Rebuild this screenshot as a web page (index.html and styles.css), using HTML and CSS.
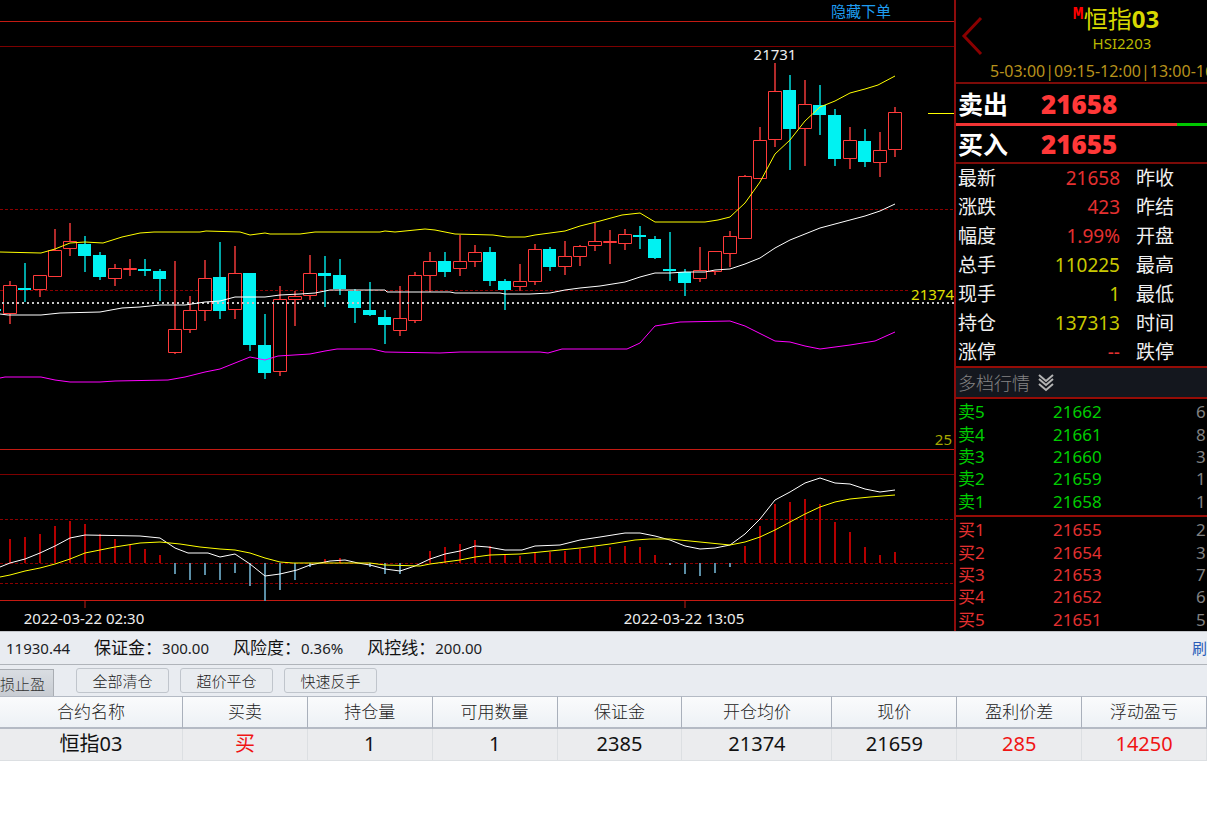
FILE: index.html
```html
<!DOCTYPE html>
<html lang="zh-CN">
<head>
<meta charset="utf-8">
<title>恒指03 HSI2203</title>
<link rel="stylesheet" href="styles.css">
</head>
<body>
<main class="market">
  <section class="chart">
    <header class="chart-bar"><a class="order-link" href="#">隐藏下单</a></header>
    <svg class="plot" viewBox="0 21 954 610" role="img" aria-label="K线图">
      <g class="frame">
        <path d="M0 21.5H954M0 449.5H954M0 600.5H954"/>
        <path d="M85 601V608M685 601V608"/>
      </g>
      <path class="frame-dim" d="M0 46.5H954M0 474.5H954"/>
      <path class="grid" d="M0 209.5H954M0 290.5H910M0 519.5H954M0 563.5H954M0 583.5H954"/>

      <!-- wicks -->
      <path class="wick-up" d="M10 281V324M40 275V297M55 229V251M70 223V256M115 264V286M130 259V276M175 261V354M190 296V333M205 260V321M235 246V319M280 286V376M295 291V326M310 255V300M400 286V336M415 272V323M430 252V292M460 235V276M475 245V267M520 264V291M535 244V285M565 241V275M580 245V266M595 223V251M610 230V264M625 229V250M700 247V282M715 251V275M730 231V267M745 175V178M760 127V141M775 63V147M805 80V166M850 127V169M880 132V177M895 107V157"/>
      <path class="wick-down" d="M25 263V302M85 236V272M100 252V280M145 259V276M160 269V301M220 242V319M250 273V351M265 314V379M325 256V307M340 259V295M355 289V323M370 282V316M385 310V344M445 252V277M490 247V286M505 279V310M550 247V271M640 226V249M655 236V259M670 232V281M685 269V296M790 75V170M820 85V135M835 109V166M865 129V167"/>
      <!-- rising bodies -->
      <path class="body-up" d="M3.5 285.5h13v28h-13zM33.5 275.5h13v14h-13zM48.5 250.5h13v26h-13zM63.5 241.5h13v7h-13zM108.5 268.5h13v10h-13zM123.5 268.5h13v1h-13zM168.5 329.5h13v23h-13zM183.5 310.5h13v19h-13zM198.5 278.5h13v32h-13zM228.5 273.5h13v36h-13zM273.5 299.5h13v72h-13zM288.5 296.5h13v3h-13zM303.5 273.5h13v22h-13zM393.5 318.5h13v12h-13zM408.5 275.5h13v45h-13zM423.5 261.5h13v14h-13zM453.5 261.5h13v7h-13zM468.5 252.5h13v9h-13zM513.5 281.5h13v5h-13zM528.5 249.5h13v32h-13zM558.5 256.5h13v10h-13zM573.5 246.5h13v10h-13zM588.5 241.5h13v4h-13zM603.5 241.5h13v1h-13zM618.5 234.5h13v9h-13zM693.5 270.5h13v8h-13zM708.5 251.5h13v20h-13zM723.5 236.5h13v17h-13zM738.5 176.5h13v62h-13zM753.5 140.5h13v38h-13zM768.5 91.5h13v48h-13zM798.5 104.5h13v24h-13zM843.5 140.5h13v18h-13zM873.5 150.5h13v12h-13zM888.5 112.5h13v37h-13z"/>
      <!-- falling bodies -->
      <path class="body-down" d="M0 309h1v2h-1zM18 288h13v2h-13zM78 244h13v12h-13zM93 255h13v22h-13zM138 269h13v2h-13zM153 271h13v8h-13zM213 277h13v34h-13zM243 273h13v72h-13zM258 345h13v28h-13zM318 273h13v3h-13zM333 275h13v14h-13zM348 291h13v17h-13zM363 310h13v5h-13zM378 317h13v8h-13zM438 261h13v11h-13zM483 252h13v29h-13zM498 281h13v9h-13zM543 249h13v18h-13zM633 235h13v2h-13zM648 239h13v19h-13zM663 269h13v2h-13zM678 272h13v11h-13zM783 90h13v39h-13zM813 105h13v10h-13zM828 115h13v44h-13zM858 141h13v21h-13z"/>

      <path class="hold-line" d="M2 303H954"/>
      <!-- bands -->
      <polyline class="line yellow" points="0,252 41,253 55,249 70,243 85,242 103,243 122,237 140,233 154,232 200,232 206,231 240,232 250,235 265,233 270,234 300,234 315,232 380,232 385,231 395,232 405,231 425,229 435,230 455,234 493,235 507,237 525,237 535,235 550,233 565,231 580,226 600,221 622,215 640,213 655,222 705,222 718,220 730,217 745,203 760,182 775,154 790,140 805,121 820,107 835,101 850,93 865,89 878,85 895,76"/>
      <polyline class="line white" points="0,314 8,315 41,315 60,313 100,312 122,308 140,307 160,305 185,305 205,302 220,301 235,297 265,297 280,295 300,294 315,293 330,290 385,290 387,292 450,292 455,293 500,293 505,294 530,294 550,293 565,290 580,288 600,286 625,282 640,277 655,273 670,273 685,272 705,272 715,270 730,269 745,264 760,258 775,248 790,240 805,234 820,228 850,220 865,216 880,211 895,204"/>
      <polyline class="line magenta" points="0,378 5,377 41,377 55,380 70,382 100,382 115,381 168,380 185,377 205,372 220,369 235,363 250,357 265,360 278,356 310,354 325,351 337,349 372,349 385,352 440,353 460,352 540,352 548,353 562,349 627,349 640,343 655,326 680,322 730,321 745,326 775,341 790,342 805,346 820,349 850,345 875,341 895,332"/>
      <path class="line yellow" d="M928 113.5H954"/>

      <!-- MACD -->
      <path class="bar-up" d="M10 539V563M25 537V563M40 534V563M55 526V563M70 521V563M85 524V563M100 534V563M115 539V563M130 545V563M145 549V563M160 555V563M325 559V563M340 558V563M430 551V563M445 547V563M460 544V563M475 540V563M490 546V563M505 554V563M520 556V563M535 553V563M550 552V563M565 551V563M580 549V563M595 547V563M610 547V563M625 546V563M640 547V563M655 555V563M745 546V563M760 526V563M775 504V563M790 502V563M805 499V563M820 504V563M835 522V563M850 532V563M865 547V563M880 555V563M895 552V563"/>
      <path class="bar-down" d="M175 563V574M190 563V580M205 563V575M220 563V580M235 563V573M250 563V586M265 563V601M280 563V590M295 563V580M310 563V567M370 563V567M385 563V574M400 563V574M670 563V565M685 563V574M700 563V576M715 563V573M730 563V567"/>
      <polyline class="line white" points="0,567 10,563 25,559 40,553 55,546 70,538 85,535 140,536 160,538 175,548 188,553 208,553 220,557 235,554 250,564 265,576 280,574 297,570 310,565 330,561 345,560 358,563 370,565 385,569 400,571 415,566 430,559 445,554 460,551 475,546 488,547 505,550 522,550 535,546 560,545 580,540 600,537 625,533 640,533 655,536 670,540 685,546 700,549 715,548 730,545 745,534 760,519 775,500 790,492 805,483 820,478 835,483 850,484 865,489 880,492 895,490"/>
      <polyline class="line yellow" points="0,577 10,575 25,571 40,568 55,564 70,559 85,553 100,550 115,547 140,543 160,542 180,544 200,547 220,549 235,550 250,553 265,558 280,562 293,563 370,563 385,565 420,566 430,564 445,562 460,560 475,557 490,555 520,554 550,551 580,548 610,544 635,540 650,539 670,539 700,542 730,545 745,542 760,537 775,530 790,522 805,514 820,507 835,502 850,499 870,497 895,495"/>

      <text class="label" x="775" y="60" text-anchor="middle">21731</text>
      <text class="label hold" x="954" y="300" text-anchor="end">21374</text>
      <text class="label scale" x="952" y="445" text-anchor="end">25</text>
      <text class="label" x="84" y="624" text-anchor="middle">2022-03-22 02:30</text>
      <text class="label" x="684" y="624" text-anchor="middle">2022-03-22 13:05</text>
    </svg>
  </section>

  <aside class="panel">
    <div class="quote">
      <header class="quote-head">
        <button class="back" type="button" aria-label="返回">
          <svg width="24" height="40" viewBox="0 0 24 40"><path d="M21 2L4 20L21 38" fill="none" stroke="#8a0000" stroke-width="3"/></svg>
        </button>
        <h1 class="name"><sup class="mark">M</sup>恒指<span class="digits">03</span></h1>
        <p class="code">HSI2203</p>
        <p class="hours">5-03:00|09:15-12:00|13:00-16</p>
      </header>
      <div class="deal"><span>卖出</span><b>21658</b></div>
      <div class="ratio"><i class="ratio-sell"></i><i class="ratio-buy"></i></div>
      <div class="deal deal-buy"><span>买入</span><b>21655</b></div>
      <div class="stats">
        <div><span>最新</span><b class="red">21658</b><span>昨收</span></div>
        <div><span>涨跌</span><b class="red">423</b><span>昨结</span></div>
        <div><span>幅度</span><b class="red">1.99%</b><span>开盘</span></div>
        <div><span>总手</span><b class="gold">110225</b><span>最高</span></div>
        <div><span>现手</span><b class="gold">1</b><span>最低</span></div>
        <div><span>持仓</span><b class="gold">137313</b><span>时间</span></div>
        <div><span>涨停</span><b class="red">--</b><span>跌停</span></div>
      </div>
      <button class="depth-head" type="button">多档行情
        <svg width="16" height="18" viewBox="0 0 16 18"><path d="M1 1L8 7L15 1M1 5L8 11L15 5M1 10L8 16L15 10" fill="none" stroke="#b4b4b4" stroke-width="2"/></svg>
      </button>
      <div class="depth asks">
        <div><span>卖5</span><span>21662</span><span class="vol">6</span></div>
        <div><span>卖4</span><span>21661</span><span class="vol">8</span></div>
        <div><span>卖3</span><span>21660</span><span class="vol">3</span></div>
        <div><span>卖2</span><span>21659</span><span class="vol">1</span></div>
        <div><span>卖1</span><span>21658</span><span class="vol">1</span></div>
      </div>
      <div class="depth bids">
        <div><span>买1</span><span>21655</span><span class="vol">2</span></div>
        <div><span>买2</span><span>21654</span><span class="vol">3</span></div>
        <div><span>买3</span><span>21653</span><span class="vol">7</span></div>
        <div><span>买4</span><span>21652</span><span class="vol">6</span></div>
        <div><span>买5</span><span>21651</span><span class="vol">5</span></div>
      </div>
    </div>
  </aside>
</main>

<section class="account">
  <div class="funds">
    <span class="num">11930.44</span>
    <span>保证金：<span class="num">300.00</span></span>
    <span>风险度：<span class="num">0.36%</span></span>
    <span>风控线：<span class="num">200.00</span></span>
    <a class="refresh" href="#">刷</a>
  </div>
  <div class="tools">
    <button class="tab" type="button">损止盈</button>
    <button class="tool" type="button">全部清仓</button>
    <button class="tool" type="button">超价平仓</button>
    <button class="tool" type="button">快速反手</button>
  </div>
  <table class="positions">
    <colgroup><col class="c-name"><col><col><col><col><col class="c-open"><col><col><col></colgroup>
    <thead>
      <tr><th>合约名称</th><th>买卖</th><th>持仓量</th><th>可用数量</th><th>保证金</th><th>开仓均价</th><th>现价</th><th>盈利价差</th><th>浮动盈亏</th></tr>
    </thead>
    <tbody>
      <tr><td>恒指03</td><td class="gain">买</td><td>1</td><td>1</td><td>2385</td><td>21374</td><td>21659</td><td class="gain">285</td><td class="gain">14250</td></tr>
    </tbody>
  </table>
</section>
</body>
</html>
```

FILE: styles.css
```css
* { box-sizing: border-box; }

body {
  margin: 0;
  background: #fff;
  color: #111;
  font-family: "Noto Sans", "Noto Sans CJK SC", sans-serif;
  overflow-x: hidden;
}

button { font-family: inherit; cursor: pointer; }
a { text-decoration: none; }
h1, p { margin: 0; }

/* Chart */
.market {
  display: grid;
  grid-template-columns: minmax(0, 1fr) 253px;
  background: #000;
}
.chart-bar {
  height: 21px;
  display: flex;
  justify-content: flex-end;
  align-items: center;
  padding-right: 63px;
  line-height: 20px;
}
.order-link { color: #1e9cf0; font-size: 15px; }
.plot { display: block; width: 100%; height: auto; }
.frame { stroke: #c41a12; fill: none; }
.frame-dim { stroke: #7c0000; }
.grid { stroke: #8c0000; stroke-dasharray: 3 2; }
.wick-up { stroke: #b22a2a; stroke-width: 2; }
.wick-down { stroke: #00a5a5; stroke-width: 2; }
.body-up { stroke: #ff3a3a; fill: #000; }
.body-down { fill: #00f2f2; }
.bar-up { stroke: #b40000; stroke-width: 2; }
.bar-down { stroke: #5b8ea6; stroke-width: 2; }
.hold-line { stroke: #c8c8c8; stroke-width: 2; stroke-dasharray: 2 3; }
.line { fill: none; stroke-width: 1; }
.yellow { stroke: #ffff00; }
.white { stroke: #fff; }
.magenta { stroke: #ff00ff; }
.label { fill: #eee; font-size: 15px; }
.hold { fill: #e0e000; }
.scale { fill: #a8a800; }

/* Quote panel */
.panel { overflow: hidden; border-left: 2px solid #8e0c0c; }
.quote {
  width: 332px;
  height: 100%;
  display: flex;
  flex-direction: column;
}
.quote-head {
  height: 84px;
  border-bottom: 2px solid #7c0b08;
  display: grid;
  grid-template-rows: 34px 18px 30px;
  justify-items: center;
  align-items: center;
  position: relative;
}
.back {
  position: absolute;
  left: 4px;
  top: 16px;
  padding: 0;
  border: 0;
  background: none;
}
.name {
  display: flex;
  color: #d8d800;
  font-size: 24px;
  font-weight: 400;
  line-height: 32px;
  padding-top: 4px;
  padding-right: 12px;
}
.digits { font-family: "Open Sans", "Noto Sans", sans-serif; font-weight: 700; }
.mark {
  color: #f00;
  font-family: "Liberation Mono", monospace;
  font-size: 18px;
  font-weight: 700;
  line-height: 22px;
}
.code { color: #b8b800; font-size: 15px; line-height: 18px; }
.hours {
  justify-self: start;
  padding: 8px 0 0 34px;
  color: #b8921c;
  font-size: 16px;
  line-height: 20px;
  white-space: nowrap;
}
.deal {
  height: 39px;
  display: grid;
  grid-template-columns: 83px 1fr;
  align-items: center;
  padding-left: 2px;
  color: #fff;
  font-size: 25px;
  font-weight: 700;
  line-height: 36px;
}
.deal b { color: #ff3838; font-family: "Open Sans", "Noto Sans", sans-serif; font-size: 26px; }
.deal-buy { height: 38px; border-bottom: 2px solid #7c0b08; }
.ratio { display: flex; height: 3px; }
.ratio-sell { flex: 2; background: #f03434; }
.ratio-buy { flex: 1; background: #00c800; }
.stats {
  display: grid;
  grid-auto-rows: 1fr;
  height: 204px;
  border-bottom: 2px solid #960c06;
}
.stats div {
  display: grid;
  grid-template-columns: 50px 112px 1fr;
  align-items: center;
  padding-left: 2px;
  color: #f0f0f0;
  font-size: 19px;
  line-height: 28px;
}
.stats b { text-align: right; font-weight: 400; }
.stats span:last-child { padding-left: 16px; }
.stats .red { color: #e43030; }
.stats .gold { color: #c8c800; }
.depth-head {
  display: flex;
  align-items: center;
  gap: 8px;
  height: 29px;
  padding: 0 0 0 2px;
  border: 0;
  background: #14171e;
  color: #848484;
  font-size: 18px;
  font-weight: 300;
  line-height: 28px;
}
.depth {
  display: grid;
  grid-auto-rows: 1fr;
  font-size: 17px;
  line-height: 20px;
}
.depth div {
  display: grid;
  grid-template-columns: 95px 143px 1fr;
  align-items: center;
  padding-left: 2px;
}
.asks {
  height: 120px;
  padding: 2px 0;
  color: #00cc00;
  border-top: 2px solid #960c06;
  border-bottom: 2px solid #960c06;
}
.bids { flex: 1; color: #e43030; padding-top: 2px; }
.vol { color: #808080; }

/* Account */
.account { background: #e9ecf1; border-top: 1px solid #c2c5ca; }
.funds {
  display: flex;
  align-items: center;
  gap: 24px;
  height: 33px;
  padding-left: 6px;
  border-bottom: 1px solid #b0b4ba;
  font-size: 17px;
  line-height: 30px;
  white-space: nowrap;
}
.num { font-size: 15px; color: #1c1c24; }
.refresh { margin-left: auto; color: #2a5cb8; font-size: 15px; }
.tools {
  display: flex;
  align-items: center;
  gap: 11px;
  height: 31px;
}
.tab {
  align-self: flex-end;
  width: 54px;
  height: 27px;
  margin-right: 11px;
  padding: 0 10px 0 0;
  border: 1px solid #a9adb3;
  border-left: 0;
  border-bottom: 0;
  background: linear-gradient(#d9dde2, #c8ccd2);
  color: #333;
  font-size: 15px;
  font-weight: 300;
  white-space: nowrap;
}
.tool {
  width: 93px;
  height: 25px;
  padding: 0;
  border: 1px solid #c0c5cc;
  border-radius: 3px;
  background: #e9ecf0;
  color: #222;
  font-size: 15px;
  font-weight: 300;
  line-height: 22px;
}
.positions {
  width: 100%;
  table-layout: fixed;
  border-collapse: separate;
  border-spacing: 0;
}
.c-name { width: 15.16%; }
.c-open { width: 12.43%; }
.positions th {
  height: 33px;
  padding: 0;
  border-top: 1px solid #b4bac4;
  border-bottom: 2px solid #b4bac4;
  border-right: 1px solid #a9b0bb;
  background: linear-gradient(#fafbfc, #edf1f5);
  color: #222;
  font-size: 17px;
  font-weight: 300;
  line-height: 28px;
}
.positions td {
  height: 32px;
  padding: 0 0 2px;
  border-right: 1px solid #dcdfe2;
  border-bottom: 1px solid #dcdfe2;
  background: #ebecee;
  text-align: center;
  font-size: 20px;
  line-height: 28px;
}
.positions .gain { color: #f01414; }
```
